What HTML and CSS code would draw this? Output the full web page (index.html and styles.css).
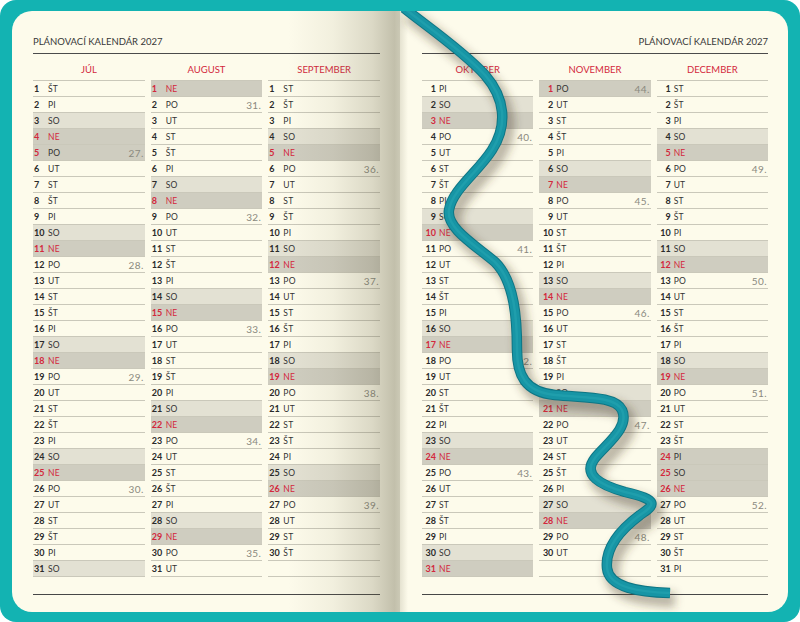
FILE: index.html
```html
<!DOCTYPE html>
<html lang="sk">
<head>
<meta charset="utf-8">
<title>Plánovací kalendár 2027</title>
<link rel="stylesheet" href="styles.css">
</head>
<body>
<div class="book">
  <section class="page left">
    <header class="ph">PLÁNOVACÍ KALENDÁR 2027</header>
    <div class="months">
      <div class="col">
        <h2 class="mn">JÚL</h2>
        <ol class="days">
          <li><b>1</b><span>ŠT</span></li>
          <li><b>2</b><span>PI</span></li>
          <li class="sa"><b>3</b><span>SO</span></li>
          <li class="su"><b>4</b><span>NE</span></li>
          <li class="ho"><b>5</b><span>PO</span><i>27.</i></li>
          <li><b>6</b><span>UT</span></li>
          <li><b>7</b><span>ST</span></li>
          <li><b>8</b><span>ŠT</span></li>
          <li><b>9</b><span>PI</span></li>
          <li class="sa"><b>10</b><span>SO</span></li>
          <li class="su"><b>11</b><span>NE</span></li>
          <li><b>12</b><span>PO</span><i>28.</i></li>
          <li><b>13</b><span>UT</span></li>
          <li><b>14</b><span>ST</span></li>
          <li><b>15</b><span>ŠT</span></li>
          <li><b>16</b><span>PI</span></li>
          <li class="sa"><b>17</b><span>SO</span></li>
          <li class="su"><b>18</b><span>NE</span></li>
          <li><b>19</b><span>PO</span><i>29.</i></li>
          <li><b>20</b><span>UT</span></li>
          <li><b>21</b><span>ST</span></li>
          <li><b>22</b><span>ŠT</span></li>
          <li><b>23</b><span>PI</span></li>
          <li class="sa"><b>24</b><span>SO</span></li>
          <li class="su"><b>25</b><span>NE</span></li>
          <li><b>26</b><span>PO</span><i>30.</i></li>
          <li><b>27</b><span>UT</span></li>
          <li><b>28</b><span>ST</span></li>
          <li><b>29</b><span>ŠT</span></li>
          <li><b>30</b><span>PI</span></li>
          <li class="sa"><b>31</b><span>SO</span></li>
        </ol>
      </div>
      <div class="col">
        <h2 class="mn">AUGUST</h2>
        <ol class="days">
          <li class="su"><b>1</b><span>NE</span></li>
          <li><b>2</b><span>PO</span><i>31.</i></li>
          <li><b>3</b><span>UT</span></li>
          <li><b>4</b><span>ST</span></li>
          <li><b>5</b><span>ŠT</span></li>
          <li><b>6</b><span>PI</span></li>
          <li class="sa"><b>7</b><span>SO</span></li>
          <li class="su"><b>8</b><span>NE</span></li>
          <li><b>9</b><span>PO</span><i>32.</i></li>
          <li><b>10</b><span>UT</span></li>
          <li><b>11</b><span>ST</span></li>
          <li><b>12</b><span>ŠT</span></li>
          <li><b>13</b><span>PI</span></li>
          <li class="sa"><b>14</b><span>SO</span></li>
          <li class="su"><b>15</b><span>NE</span></li>
          <li><b>16</b><span>PO</span><i>33.</i></li>
          <li><b>17</b><span>UT</span></li>
          <li><b>18</b><span>ST</span></li>
          <li><b>19</b><span>ŠT</span></li>
          <li><b>20</b><span>PI</span></li>
          <li class="sa"><b>21</b><span>SO</span></li>
          <li class="su"><b>22</b><span>NE</span></li>
          <li><b>23</b><span>PO</span><i>34.</i></li>
          <li><b>24</b><span>UT</span></li>
          <li><b>25</b><span>ST</span></li>
          <li><b>26</b><span>ŠT</span></li>
          <li><b>27</b><span>PI</span></li>
          <li class="sa"><b>28</b><span>SO</span></li>
          <li class="su"><b>29</b><span>NE</span></li>
          <li><b>30</b><span>PO</span><i>35.</i></li>
          <li><b>31</b><span>UT</span></li>
        </ol>
      </div>
      <div class="col">
        <h2 class="mn">SEPTEMBER</h2>
        <ol class="days">
          <li><b>1</b><span>ST</span></li>
          <li><b>2</b><span>ŠT</span></li>
          <li><b>3</b><span>PI</span></li>
          <li class="sa"><b>4</b><span>SO</span></li>
          <li class="su"><b>5</b><span>NE</span></li>
          <li><b>6</b><span>PO</span><i>36.</i></li>
          <li><b>7</b><span>UT</span></li>
          <li><b>8</b><span>ST</span></li>
          <li><b>9</b><span>ŠT</span></li>
          <li><b>10</b><span>PI</span></li>
          <li class="sa"><b>11</b><span>SO</span></li>
          <li class="su"><b>12</b><span>NE</span></li>
          <li><b>13</b><span>PO</span><i>37.</i></li>
          <li><b>14</b><span>UT</span></li>
          <li><b>15</b><span>ST</span></li>
          <li><b>16</b><span>ŠT</span></li>
          <li><b>17</b><span>PI</span></li>
          <li class="sa"><b>18</b><span>SO</span></li>
          <li class="su"><b>19</b><span>NE</span></li>
          <li><b>20</b><span>PO</span><i>38.</i></li>
          <li><b>21</b><span>UT</span></li>
          <li><b>22</b><span>ST</span></li>
          <li><b>23</b><span>ŠT</span></li>
          <li><b>24</b><span>PI</span></li>
          <li class="sa"><b>25</b><span>SO</span></li>
          <li class="su"><b>26</b><span>NE</span></li>
          <li><b>27</b><span>PO</span><i>39.</i></li>
          <li><b>28</b><span>UT</span></li>
          <li><b>29</b><span>ST</span></li>
          <li><b>30</b><span>ŠT</span></li>
          <li></li>
        </ol>
      </div>
    </div>
    <div class="foot"></div>
    <div class="spine"></div>
  </section>
  <section class="page right">
    <header class="ph">PLÁNOVACÍ KALENDÁR 2027</header>
    <div class="months">
      <div class="col">
        <h2 class="mn">OKTÓBER</h2>
        <ol class="days">
          <li><b>1</b><span>PI</span></li>
          <li class="sa"><b>2</b><span>SO</span></li>
          <li class="su"><b>3</b><span>NE</span></li>
          <li><b>4</b><span>PO</span><i>40.</i></li>
          <li><b>5</b><span>UT</span></li>
          <li><b>6</b><span>ST</span></li>
          <li><b>7</b><span>ŠT</span></li>
          <li><b>8</b><span>PI</span></li>
          <li class="sa"><b>9</b><span>SO</span></li>
          <li class="su"><b>10</b><span>NE</span></li>
          <li><b>11</b><span>PO</span><i>41.</i></li>
          <li><b>12</b><span>UT</span></li>
          <li><b>13</b><span>ST</span></li>
          <li><b>14</b><span>ŠT</span></li>
          <li><b>15</b><span>PI</span></li>
          <li class="sa"><b>16</b><span>SO</span></li>
          <li class="su"><b>17</b><span>NE</span></li>
          <li><b>18</b><span>PO</span><i>42.</i></li>
          <li><b>19</b><span>UT</span></li>
          <li><b>20</b><span>ST</span></li>
          <li><b>21</b><span>ŠT</span></li>
          <li><b>22</b><span>PI</span></li>
          <li class="sa"><b>23</b><span>SO</span></li>
          <li class="su"><b>24</b><span>NE</span></li>
          <li><b>25</b><span>PO</span><i>43.</i></li>
          <li><b>26</b><span>UT</span></li>
          <li><b>27</b><span>ST</span></li>
          <li><b>28</b><span>ŠT</span></li>
          <li><b>29</b><span>PI</span></li>
          <li class="sa"><b>30</b><span>SO</span></li>
          <li class="su"><b>31</b><span>NE</span></li>
        </ol>
      </div>
      <div class="col">
        <h2 class="mn">NOVEMBER</h2>
        <ol class="days">
          <li class="ho"><b>1</b><span>PO</span><i>44.</i></li>
          <li><b>2</b><span>UT</span></li>
          <li><b>3</b><span>ST</span></li>
          <li><b>4</b><span>ŠT</span></li>
          <li><b>5</b><span>PI</span></li>
          <li class="sa"><b>6</b><span>SO</span></li>
          <li class="su"><b>7</b><span>NE</span></li>
          <li><b>8</b><span>PO</span><i>45.</i></li>
          <li><b>9</b><span>UT</span></li>
          <li><b>10</b><span>ST</span></li>
          <li><b>11</b><span>ŠT</span></li>
          <li><b>12</b><span>PI</span></li>
          <li class="sa"><b>13</b><span>SO</span></li>
          <li class="su"><b>14</b><span>NE</span></li>
          <li><b>15</b><span>PO</span><i>46.</i></li>
          <li><b>16</b><span>UT</span></li>
          <li><b>17</b><span>ST</span></li>
          <li><b>18</b><span>ŠT</span></li>
          <li><b>19</b><span>PI</span></li>
          <li class="sa"><b>20</b><span>SO</span></li>
          <li class="su"><b>21</b><span>NE</span></li>
          <li><b>22</b><span>PO</span><i>47.</i></li>
          <li><b>23</b><span>UT</span></li>
          <li><b>24</b><span>ST</span></li>
          <li><b>25</b><span>ŠT</span></li>
          <li><b>26</b><span>PI</span></li>
          <li class="sa"><b>27</b><span>SO</span></li>
          <li class="su"><b>28</b><span>NE</span></li>
          <li><b>29</b><span>PO</span><i>48.</i></li>
          <li><b>30</b><span>UT</span></li>
          <li></li>
        </ol>
      </div>
      <div class="col">
        <h2 class="mn">DECEMBER</h2>
        <ol class="days">
          <li><b>1</b><span>ST</span></li>
          <li><b>2</b><span>ŠT</span></li>
          <li><b>3</b><span>PI</span></li>
          <li class="sa"><b>4</b><span>SO</span></li>
          <li class="su"><b>5</b><span>NE</span></li>
          <li><b>6</b><span>PO</span><i>49.</i></li>
          <li><b>7</b><span>UT</span></li>
          <li><b>8</b><span>ST</span></li>
          <li><b>9</b><span>ŠT</span></li>
          <li><b>10</b><span>PI</span></li>
          <li class="sa"><b>11</b><span>SO</span></li>
          <li class="su"><b>12</b><span>NE</span></li>
          <li><b>13</b><span>PO</span><i>50.</i></li>
          <li><b>14</b><span>UT</span></li>
          <li><b>15</b><span>ST</span></li>
          <li><b>16</b><span>ŠT</span></li>
          <li><b>17</b><span>PI</span></li>
          <li class="sa"><b>18</b><span>SO</span></li>
          <li class="su"><b>19</b><span>NE</span></li>
          <li><b>20</b><span>PO</span><i>51.</i></li>
          <li><b>21</b><span>UT</span></li>
          <li><b>22</b><span>ST</span></li>
          <li><b>23</b><span>ŠT</span></li>
          <li class="ho"><b>24</b><span>PI</span></li>
          <li class="ho"><b>25</b><span>SO</span></li>
          <li class="su"><b>26</b><span>NE</span></li>
          <li><b>27</b><span>PO</span><i>52.</i></li>
          <li><b>28</b><span>UT</span></li>
          <li><b>29</b><span>ST</span></li>
          <li><b>30</b><span>ŠT</span></li>
          <li><b>31</b><span>PI</span></li>
        </ol>
      </div>
    </div>
    <div class="foot"></div>
    <div class="gutter"></div>
  </section>
  <svg class="ribbon" viewBox="0 0 800 622" width="800" height="622" aria-hidden="true">
    <defs>
      <filter id="rsh" x="-30%" y="-30%" width="160%" height="160%"><feGaussianBlur stdDeviation="4"/></filter>
      <clipPath id="pg"><rect x="12" y="11" width="776" height="601"/></clipPath>
      <path id="rp" d="M404,8 C425,25 462,50 485,75 C505,98 508,125 492,150 C478,172 452,190 449,210 C446,228 475,245 495,262 C515,282 517,320 517,350 C517,375 525,392 555,395 C585,398 615,396 622,410 C630,428 605,445 595,458 C582,475 600,485 625,492 C660,500 655,505 640,515 C620,530 605,548 607,568 C609,588 640,592 670,593"/>
    </defs>
    <g clip-path="url(#pg)" fill="none">
      <use href="#rp" transform="translate(5,7)" stroke="rgba(70,62,35,0.36)" stroke-width="15" filter="url(#rsh)"/>
      <use href="#rp" stroke="#0e7584" stroke-width="10.5"/>
      <use href="#rp" stroke="#1795a5" stroke-width="8.5"/>
      <use href="#rp" stroke="#27a7b4" stroke-width="2.5" opacity="0.5"/>
    </g>
  </svg>
</div>
</body>
</html>
```

FILE: styles.css
```css
* {
  box-sizing: border-box;
  margin: 0;
  padding: 0;
}

body {
  margin: 0;
  background: #ffffff;
  font-family: Lato, "Liberation Sans", sans-serif;
}

.book {
  position: relative;
  width: 800px;
  height: 622px;
  background: #13b3b2;
  border-radius: 16px;
  padding: 11px 12px 10px;
  display: flex;
  overflow: hidden;
}

.page {
  position: relative;
  width: 388px;
  height: 601px;
  background: #fdfbeb;
}

.page.left {
  border-radius: 20px 0 0 20px;
  padding: 0 20px 0 21px;
}

.page.right {
  border-radius: 0 20px 20px 0;
  padding: 0 20px 0 22px;
}

.ph {
  height: 43px;
  border-bottom: 1px solid #4b4b4b;
  display: flex;
  align-items: flex-end;
  padding-bottom: 5px;
  font-size: 9.5px;
  line-height: 12px;
  color: #383838;
  font-weight: 400;
}

.right .ph {
  justify-content: flex-end;
}

.months {
  display: grid;
  grid-template-columns: repeat(3, 1fr);
  column-gap: 6px;
}

.col {
  display: flex;
  flex-direction: column;
}

.mn {
  height: 26px;
  padding-top: 10px;
  text-align: center;
  color: #d3283c;
  font-size: 9.5px;
  line-height: 12px;
  font-weight: 400;
}

.days {
  list-style: none;
  border-bottom: 1px solid #cac8ba;
}

.days li {
  height: 16px;
  border-top: 1px solid #cac8ba;
  display: flex;
  align-items: center;
  font-size: 8.5px;
  letter-spacing: 0.2px;
  color: #333333;
}

.days b {
  flex: none;
  width: 15px;
  padding-left: 1px;
  font-size: 9px;
  font-weight: 700;
  letter-spacing: 0;
  color: #2a2a2a;
}

.right .days b {
  width: 14px;
  padding-left: 0;
  text-align: right;
  margin-right: 3px;
}

.days i {
  margin-left: auto;
  padding-right: 1px;
  font-style: normal;
  font-size: 10px;
  letter-spacing: 0.4px;
  color: #8a897e;
}

.days .sa {
  background: #e3e1d3;
}

.days .su,
.days .ho {
  background: #cfcdc0;
}

.days .su b,
.days .su span,
.days .ho b {
  color: #d3283c;
}

.foot {
  margin-top: 17px;
  border-top: 1px solid #474747;
}

.spine {
  position: absolute;
  top: 0;
  bottom: 0;
  right: 0;
  width: 112px;
  pointer-events: none;
  background: linear-gradient(to right,
    rgba(110, 104, 70, 0) 0%,
    rgba(110, 104, 70, 0.08) 40%,
    rgba(100, 95, 65, 0.22) 75%,
    rgba(90, 86, 58, 0.36) 95%,
    rgba(90, 86, 58, 0.30) 100%);
}

.gutter {
  position: absolute;
  top: 0;
  bottom: 0;
  left: 0;
  width: 8px;
  pointer-events: none;
  background: linear-gradient(to right, rgba(80, 75, 45, 0.14), rgba(80, 75, 45, 0));
}

.ribbon {
  position: absolute;
  left: 0;
  top: 0;
  pointer-events: none;
}
```
